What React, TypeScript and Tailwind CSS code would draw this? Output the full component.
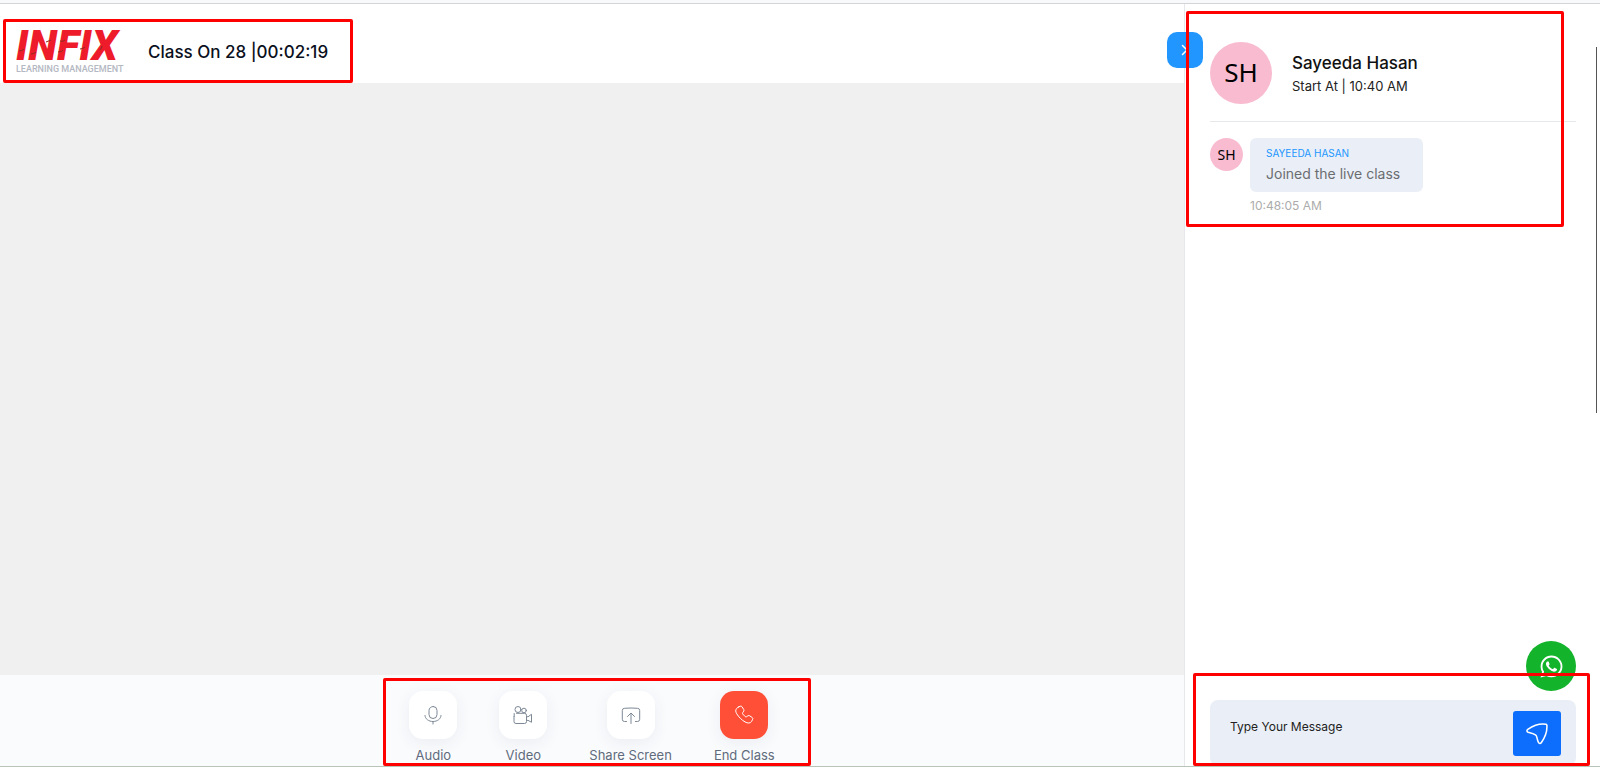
import React from 'react';
import { FaWhatsapp } from 'react-icons/fa';

const iconProps = {
  fill: 'none',
  stroke: 'currentColor',
  strokeLinecap: 'round' as const,
  strokeLinejoin: 'round' as const,
  'aria-hidden': true,
};

const MicIcon = () => (
  <svg {...iconProps} className="h-5 w-5" viewBox="0 0 20 20">
    <rect x="6" y="1.5" width="8" height="12" rx="4" />
    <path d="M2 10.5c0 3.300 3.600 6 8 6s8-2.700 8-6M10 16.500v2.500" />
  </svg>
);

const CameraIcon = () => (
  <svg {...iconProps} className="h-5 w-5" viewBox="0 0 20 20">
    <circle cx="5" cy="4.500" r="3" />
    <circle cx="11" cy="5.500" r="2.300" />
    <path d="M3.500 8.300h8a2 2 0 0 1 2 2v6.200a2 2 0 0 1-2 2h-8.500a2 2 0 0 1-2-2v-5" />
    <path d="M1.200 11.500V8.500" />
    <path d="M13.500 11.600l1.500.2 3.500-2.500v8l-3.500-2-1.500.2" />
  </svg>
);

const ShareIcon = () => (
  <svg {...iconProps} className="h-5 w-5" viewBox="0 0 20 20">
    <path d="M5.500 16.500H3.500a2.200 2.200 0 0 1-2.200-2.200V5.500a2.200 2.200 0 0 1 2.200-2.200c4.200-.4 8.800-.4 13 0a2.200 2.200 0 0 1 2.200 2.200v8.800a2.200 2.200 0 0 1-2.200 2.200H14.500" />
    <path d="M10 18.500V8.500M6.500 11.500L10 8l3.500 3.500" />
  </svg>
);

const PhoneIcon = () => (
  <svg {...iconProps} className="h-5 w-5" viewBox="0 0 20 20">
    <path d="M4.200 2.200l2-1c.7-.3 1.300-.1 1.700.5l1.800 2.700c.4.600.4 1.200 0 1.800l-1 1.500c-.3.500-.3.900.1 1.400l2.300 2.400c.4.400.9.500 1.400.2l1.400-.9c.6-.4 1.200-.4 1.800 0l2.500 1.700c.7.500.8 1.100.4 1.800l-1 2.200c-1.200 2-4.100 1.900-6.600.4C7.500 14.900 4.900 12.200 2.700 8.700 1.200 6.300 1.300 3.700 4.200 2.200z" />
  </svg>
);

const SendIcon = () => (
  <svg {...iconProps} className="h-[22px] w-[22px]" viewBox="0 0 20 20" strokeWidth="1.400">
    <path d="M18.200 1.200C12.500.3 6.500 2.500 1.600 5.800c-1.100.8-1 2 .3 2.600 2.600.9 6.300 1.100 7.500 3.200.8 1.700.7 4 1.900 6 .7 1.300 1.800 1.400 2.700.2 3.100-4.300 5.300-10.600 5-15.600-.1-.6-.3-.9-.8-1z" />
  </svg>
);

const Logo = () => (
  <a href="#" className="flex w-[108px] flex-col items-start">
    <span className="relative font-['Roboto'] text-[42px] leading-[34px] font-black italic text-[#ee1c2b]">
      INFIX
      <svg className="absolute top-0 left-0 h-[34px] w-[104px]" viewBox="0 0 104 34" fill="none" stroke="#8c2a24" aria-hidden="true">
        <path d="M3 22q3 0 5-2M15 25q3 0 5-2M30 13l5-2M42 23q4 0 5-2M44 12q3 1 5-1M64 20q3 0 5-2M84 21q2-2 2-4" />
      </svg>
    </span>
    <span className="font-['Roboto'] text-[9px] leading-3 font-medium whitespace-nowrap text-[#b4b8c2]">LEARNING MANAGEMENT</span>
  </a>
);

const controls = [
  { label: 'Audio', icon: <MicIcon />, style: 'bg-white text-[#7d8896]' },
  { label: 'Video', icon: <CameraIcon />, style: 'bg-white text-[#7d8896]' },
  { label: 'Share Screen', icon: <ShareIcon />, style: 'bg-white text-[#7d8896]' },
  { label: 'End Class', icon: <PhoneIcon />, style: 'bg-[#ff5037] text-white' },
];

const Highlight: React.FC<{ className: string }> = ({ className }) => (
  <div className={`pointer-events-none absolute z-20 rounded-[2px] border-3 border-[#ff0000] ${className}`}></div>
);

const App: React.FC = () => {
  return (
    <div className="flex h-screen flex-col overflow-hidden border-b border-[#b9c4b9] bg-white font-['Inter',sans-serif]">
      <div className="h-1 shrink-0 border-b border-[#d3d4d8] bg-[#f8f9fb]"></div>

      <div className="flex min-h-0 flex-1">
        {/* Class area */}
        <main className="flex min-w-0 flex-1 flex-col">
          <header className="relative flex h-[79px] shrink-0 items-center pt-4 pl-4">
            <Logo />
            <h1 className="ml-6 text-[17px] leading-6 font-medium text-[#0b1020]">Class On 28 |00:02:19</h1>
            <Highlight className="top-[15px] left-[3px] h-16 w-[350px]" />
            <button
              type="button"
              aria-label="Collapse chat"
              className="absolute top-7 -right-[19px] z-10 flex h-9 w-9 items-center justify-center rounded-[10px] bg-[#2196ff] text-white"
            >
              <svg {...iconProps} className="h-3 w-3" viewBox="0 0 12 12" strokeWidth="1.500">
                <path d="M3.500 1.500L8 6l-4.500 4.500" />
              </svg>
            </button>
          </header>

          <section className="flex-1 bg-[#f0f0f0]"></section>

          <footer className="relative flex h-[91px] shrink-0 justify-center gap-[42px] bg-[#fafbfd] pt-4">
            {controls.map(control => (
              <label key={control.label} className="flex flex-col items-center text-[13px] leading-5 text-[#5f6b7c]">
                <button
                  type="button"
                  className={`mb-1.5 flex h-12 w-12 items-center justify-center rounded-[14px] shadow-[0_4px_16px_rgba(30,50,90,0.07)] ${control.style}`}
                >
                  {control.icon}
                </button>
                {control.label}
              </label>
            ))}
            <Highlight className="top-[3px] left-1/2 h-[88px] w-[428px] -translate-x-[209px]" />
          </footer>
        </main>

        {/* Chat */}
        <aside className="relative flex w-[416px] shrink-0 flex-col border-l border-[#e6e8ec] pr-6 pl-[25px]">
          <div className="flex h-[118px] shrink-0 items-center gap-5 border-b border-[#e6e8e9] pt-5">
            <div className="flex h-[62px] w-[62px] items-center justify-center rounded-full bg-[#f8bbd0] font-['Noto_Sans'] text-[26px] text-black">
              SH
            </div>
            <div className="pt-0.5">
              <h2 className="text-[17px] leading-6 font-medium text-[#111]">Sayeeda Hasan</h2>
              <p className="text-[13px] leading-[22px] text-[#222]">Start At | 10:40 AM</p>
            </div>
          </div>

          <div className="mt-4 flex flex-1 items-start gap-[7px]">
            <div className="flex h-[33px] w-[33px] items-center justify-center rounded-full bg-[#f8bbd0] font-['Noto_Sans'] text-sm text-black">
              SH
            </div>
            <div>
              <div className="rounded-md bg-[#eaeff7] py-1.5 pr-[23px] pl-4">
                <p className="text-[10px] leading-[18px] text-[#2196ff]">SAYEEDA HASAN</p>
                <p className="text-sm leading-6 text-[#6a6d70]">Joined the live class</p>
              </div>
              <time className="mt-[5px] block text-xs leading-[18px] text-[#acacac]">10:48:05 AM</time>
            </div>
          </div>

          <form className="flex h-[66px] shrink-0 items-start rounded-lg bg-[#eaeff7] py-[11px] pr-[15px] pl-5" onSubmit={e => e.preventDefault()}>
            <input
              type="text"
              aria-label="Message"
              placeholder="Type Your Message"
              className="h-[30px] min-w-0 flex-1 bg-transparent text-xs text-[#222] outline-none placeholder:text-[#222]"
            />
            <button
              type="submit"
              aria-label="Send"
              className="flex h-[45px] w-12 items-center justify-center rounded-[3px] bg-[#0d6efd] text-white"
            >
              <SendIcon />
            </button>
          </form>

          <a
            href="#"
            aria-label="WhatsApp"
            className="absolute right-6 bottom-[75px] flex h-[50px] w-[50px] items-center justify-center rounded-full bg-[#13b42c] text-white"
          >
            <FaWhatsapp size={25} />
          </a>

          <div className="absolute top-[43px] right-[3px] h-[366px] w-px bg-[#555]"></div>
          <Highlight className="top-[7px] left-px h-[216px] w-[378px]" />
          <Highlight className="right-[10px] bottom-0 left-2 h-[93px]" />
        </aside>
      </div>
    </div>
  );
};

export default App;
